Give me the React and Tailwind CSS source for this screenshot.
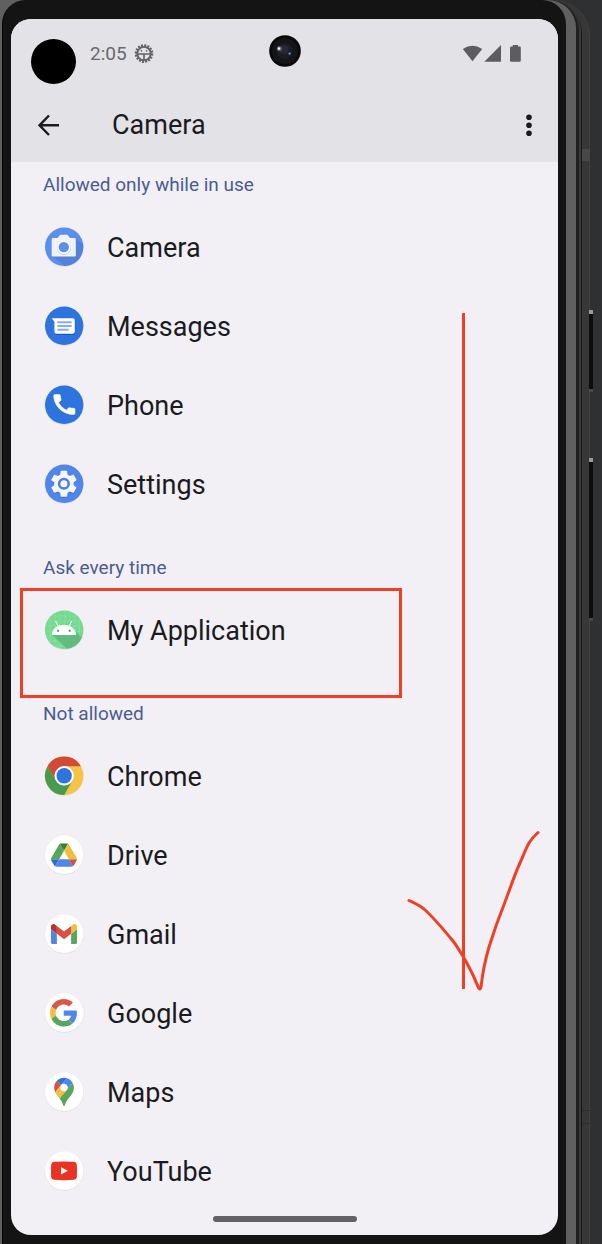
import React from "react";

function Disc({ fill = "#ffffff", children }) {
  return (
    <svg viewBox="0 0 42 42" className="size-[42px] shrink-0" aria-hidden="true">
      <circle cx="21.2" cy="21.3" r="19.6" fill="#000000" opacity="0.06" />
      <circle cx="21.2" cy="20.8" r="19.2" fill={fill} />
      {children}
    </svg>
  );
}

function CameraIcon() {
  return (
    <Disc fill="#5a8fee">
      <path d="M32.5 12.5 L40 18.5 A19.2 19.2 0 0 1 22 40 L9.500 30 Z" fill="#4f80d2" opacity="0.8" />
      <path d="M10 12 H14.6 L17 8.7 H24.6 L27 12 H31.5 Q32.8 12 32.8 13.3 V29.2 Q32.8 30.5 31.5 30.5 H10 Q8.7 30.5 8.7 29.2 V13.3 Q8.7 12 10 12 Z" fill="#f1f1f1" />
      <circle cx="20.9" cy="21.9" r="7" fill="#c9cdd4" />
      <circle cx="20.8" cy="21.1" r="6.8" fill="#fafafa" />
      <circle cx="20.8" cy="21.1" r="5.2" fill="#5a8fee" />
    </Disc>
  );
}

function MessagesIcon() {
  const bubble = "M8.7 13.2 H29.6 Q31.8 13.2 31.8 15.4 V26.6 Q31.8 28.8 29.6 28.8 H13.6 Q11.4 28.8 11.4 26.6 V17 Z";
  return (
    <Disc fill="#2e74df">
      <path d={bubble} fill="#12489f" opacity="0.6" transform="translate(0.5 1.2)" />
      <path d={bubble} fill="#ffffff" />
      <path d="M14.3 17.2 H28.7 M14.3 21 H28.7 M14.3 24.8 H25.7" stroke="#86aff2" strokeWidth="1.9" />
    </Disc>
  );
}

function PhoneIcon() {
  const handset =
    "M20.01 15.38c-1.23 0-2.42-.2-3.53-.56-.35-.12-.74-.03-1.01.24l-1.57 1.97c-2.83-1.35-5.48-3.9-6.89-6.83l1.95-1.66c.27-.28.35-.67.24-1.02-.37-1.11-.56-2.3-.56-3.53 0-.54-.45-.99-.99-.99H4.19C3.65 3 3 3.24 3 3.99 3 13.28 10.73 21 20.01 21c.71 0 .99-.63.99-1.18v-3.45c0-.54-.45-.99-.99-.99z";
  return (
    <Disc fill="#2e74df">
      <path d={handset} fill="#12489f" opacity="0.5" transform="translate(7.4 7.9) scale(1.18 1.12)" />
      <path d={handset} fill="#ffffff" stroke="#ffffff" strokeWidth="0.5" strokeLinejoin="round" transform="translate(7.2 7.1) scale(1.18 1.12)" />
    </Disc>
  );
}

function SettingsIcon() {
  const gear =
    "M19.14,12.94c0.04-0.3,0.06-0.61,0.06-0.94c0-0.32-0.02-0.64-0.07-0.94l2.03-1.58c0.18-0.14,0.23-0.41,0.12-0.61l-1.92-3.32c-0.12-0.22-0.37-0.29-0.59-0.22l-2.39,0.96c-0.5-0.38-1.03-0.7-1.62-0.94L14.4,2.81c-0.04-0.24-0.24-0.41-0.48-0.41h-3.84c-0.24,0-0.43,0.17-0.47,0.41L9.25,5.35C8.66,5.59,8.12,5.92,7.63,6.29L5.24,5.33c-0.22-0.08-0.47,0-0.59,0.22L2.74,8.87C2.62,9.08,2.66,9.34,2.86,9.48l2.03,1.58C4.84,11.36,4.8,11.69,4.8,12s0.02,0.64,0.07,0.94l-2.03,1.58c-0.18,0.14-0.23,0.41-0.12,0.61l1.92,3.32c0.12,0.22,0.37,0.29,0.59,0.22l2.39-0.96c0.5,0.38,1.03,0.7,1.62,0.94l0.36,2.54c0.05,0.24,0.24,0.41,0.48,0.41h3.84c0.24,0,0.44-0.17,0.47-0.41l0.36-2.54c0.59-0.24,1.13-0.56,1.62-0.94l2.39,0.96c0.22,0.08,0.47,0,0.59-0.22l1.92-3.32c0.12-0.22,0.07-0.47-0.12-0.61L19.14,12.94z";
  return (
    <Disc fill="#4f86ec">
      <path d={gear} fill="#2f62bf" opacity="0.6" transform="translate(4.8 5.6) scale(1.35)" />
      <path d={gear} fill="#f5f5f5" transform="translate(4.7 4.6) scale(1.35)" />
      <circle cx="20.9" cy="20.8" r="4.8" fill="#f5f5f5" stroke="#4a80e4" strokeWidth="2.5" />
    </Disc>
  );
}

function AndroidIcon() {
  return (
    <Disc fill="#73da8f">
      <path
        d="M7 8V34 M12 5V37 M17 2.5V39.5 M22 2V40 M27 3V39 M32 5.5V36.5 M36.5 10V32 M9 7H33 M4.5 12H37.5 M2.5 17H39.5 M2 22H40 M3 27H39 M5.5 32H36.5 M10 37H32"
        stroke="#95e4a9"
        strokeWidth="0.5"
      />
      <path d="M9 26 H33 L33 23 L39 28.5 A19.2 19.2 0 0 1 24 39.8 Z" fill="#5fb67d" opacity="0.85" />
      <path d="M8.7 26 A12.2 11.4 0 0 1 33 26 Z" fill="#ffffff" />
      <path d="M12.9 12.6 L15 16.4 M28.5 12.6 L26.6 16.4" stroke="#ffffff" strokeWidth="1.1" strokeLinecap="round" />
      <circle cx="15" cy="21.7" r="1.2" fill="#5bae79" />
      <circle cx="26.7" cy="21.7" r="1.2" fill="#5bae79" />
    </Disc>
  );
}

function ChromeIcon() {
  return (
    <Disc fill="#f6c445">
      <g transform="translate(0.5 0.1) scale(0.985)">
        <path d="M4.1 11.25 A19.5 19.5 0 0 1 37.9 11.25 L21 11.25 L12.56 25.88 Z" fill="#d24935" />
        <path d="M4.1 11.25 L12.56 25.88 L29.44 25.88 L21 40.5 A19.5 19.5 0 0 1 4.1 11.25 Z" fill="#479a4e" />
        <circle cx="21" cy="21" r="9.9" fill="#ffffff" />
        <circle cx="21" cy="21" r="7.8" fill="#2e74df" />
      </g>
    </Disc>
  );
}

function DriveIcon() {
  return (
    <Disc>
      <g transform="translate(8 9.4) scale(0.298)">
        <path d="m6.6 66.85 3.85 6.65c.8 1.4 1.95 2.5 3.3 3.3l13.75-23.8h-27.5c0 1.55.4 3.1 1.2 4.5z" fill="#2f68cf" />
        <path d="m43.65 25-13.75-23.8c-1.35.8-2.5 1.9-3.3 3.3l-25.4 44a9.06 9.06 0 0 0 -1.2 4.5h27.5z" fill="#58a55c" />
        <path d="m73.55 76.8c1.35-.8 2.5-1.9 3.3-3.3l1.6-2.75 7.65-13.25c.8-1.4 1.2-2.95 1.2-4.5h-27.502l5.852 11.5z" fill="#d95040" />
        <path d="m43.65 25 13.75-23.8c-1.35-.8-2.9-1.2-4.5-1.2h-18.5c-1.6 0-3.15.45-4.5 1.2z" fill="#3a7d3c" />
        <path d="m59.8 53h-32.3l-13.75 23.8c1.35.8 2.9 1.2 4.5 1.2h50.8c1.6 0 3.15-.45 4.5-1.2z" fill="#5086ec" />
        <path d="m73.4 26.5-12.7-22c-.8-1.4-1.95-2.5-3.3-3.3l-13.75 23.8 16.15 28h27.45c0-1.55-.4-3.1-1.2-4.5z" fill="#f2be42" />
      </g>
    </Disc>
  );
}

function GmailIcon() {
  return (
    <Disc>
      <g transform="translate(-7.5 -1.6) scale(0.297 0.303)">
        <path d="M58 108h14V74L52 59v43c0 3.32 2.69 6 6 6" fill="#5086ec" />
        <path d="M120 108h14c3.32 0 6-2.69 6-6V59l-20 15" fill="#58a55c" />
        <path d="M120 48v26l20-15v-8c0-7.42-8.47-11.65-14.4-7.2" fill="#f2be42" />
        <path d="M72 74V48l24 18 24-18v26L96 92" fill="#d95040" />
        <path d="M52 51v8l20 15V48l-5.6-4.2c-5.94-4.45-14.4-.22-14.4 7.2" fill="#b3352b" />
      </g>
    </Disc>
  );
}

function GoogleIcon() {
  return (
    <Disc>
      <g transform="translate(7 7) scale(0.573)">
        <path d="M24 9.5c3.54 0 6.71 1.22 9.21 3.6l6.85-6.85C35.9 2.38 30.47 0 24 0 14.62 0 6.51 5.38 2.56 13.22l7.98 6.19C12.43 13.72 17.74 9.5 24 9.5z" fill="#d95848" />
        <path d="M46.98 24.55c0-1.57-.15-3.09-.38-4.55H24v9.02h12.94c-.58 2.96-2.26 5.48-4.78 7.18l7.73 6c4.51-4.18 7.09-10.36 7.09-17.65z" fill="#5086ec" />
        <path d="M10.53 28.59c-.48-1.45-.76-2.99-.76-4.59s.27-3.14.76-4.59l-7.98-6.19C.92 16.46 0 20.12 0 24c0 3.88.92 7.54 2.56 10.78l7.97-6.19z" fill="#f2be42" />
        <path d="M24 48c6.48 0 11.93-2.13 15.89-5.81l-7.73-6c-2.15 1.45-4.92 2.3-8.16 2.3-6.26 0-11.57-4.22-13.47-9.91l-7.98 6.19C6.51 42.62 14.62 48 24 48z" fill="#58a55c" />
      </g>
    </Disc>
  );
}

function MapsIcon() {
  return (
    <Disc>
      <g transform="translate(11.2 6.7) scale(0.213)">
        <path d="M60.2 2.2C55.8.8 51 0 46.1 0 32 0 19.3 6.4 10.8 16.5l21.8 18.3L60.2 2.2z" fill="#2e74df" />
        <path d="M10.8 16.5C4.1 24.5 0 34.9 0 46.1c0 8.7 1.7 15.7 4.6 22l28-33.3-21.8-18.3z" fill="#d95040" />
        <path d="M46.2 28.5c9.8 0 17.7 7.9 17.7 17.7 0 4.3-1.6 8.3-4.2 11.4 0 0 13.9-16.6 27.5-32.7-5.6-10.8-15.3-19-27-22.7L32.6 34.8c3.3-3.8 8.1-6.3 13.6-6.3" fill="#5086ec" />
        <path d="M46.2 63.8c-9.8 0-17.7-7.9-17.7-17.7 0-4.3 1.5-8.3 4.1-11.3l-28 33.3c4.8 10.6 12.8 19.2 21 29.9l34.1-40.5c-3.3 3.9-8.1 6.3-13.5 6.3" fill="#f2be42" />
        <path d="M59.1 109.2c15.4-24.1 33.3-35 33.3-63 0-7.7-1.9-14.9-5.2-21.3L25.6 98c2.6 3.4 5.3 7.3 7.9 11.3 9.4 14.5 6.8 23.1 12.8 23.1s3.4-8.7 12.8-23.2" fill="#58a55c" />
      </g>
    </Disc>
  );
}

function YouTubeIcon() {
  return (
    <Disc>
      <path d="M11 11.8 Q21 11 31 11.8 Q33.4 12 33.8 14.4 Q34.3 20.8 33.8 27.2 Q33.4 29.600 31 29.8 Q21 30.6 11 29.8 Q8.6 29.6 8.2 27.2 Q7.7 20.8 8.2 14.4 Q8.6 12 11 11.8 Z" fill="#ea3323" />
      <path d="M18 17.2 L24.8 20.8 L18 24.4 Z" fill="#ffffff" />
    </Disc>
  );
}

function DebugIcon() {
  return (
    <svg viewBox="0 0 20 20" className="size-5" fill="none" stroke="#626164" aria-hidden="true">
      <circle cx="10" cy="9.600" r="8.1" strokeWidth="2.4" strokeDasharray="1.900 1.28" />
      <circle cx="10" cy="9.600" r="6.7" strokeWidth="1.9" />
      <path d="M4 10 H16 M10 10 V16" strokeWidth="1.6" />
      <circle cx="7.4" cy="6.900" r="0.8" fill="#626164" stroke="none" />
      <circle cx="12.6" cy="6.900" r="0.8" fill="#626164" stroke="none" />
    </svg>
  );
}

function StatusIcons() {
  return (
    <svg viewBox="0 0 60 20" className="h-5 w-[60px]" fill="#5d5c5f" aria-label="Wi-Fi, signal and battery">
      <path d="M0.8 5 Q10.5 -1.4 20.2 5 L10.5 17.2 Z" />
      <path d="M22.3 17.8 L39 1 V17.8 Z" />
      <path d="M50.8 1 H56 V2.6 H57.5 Q58.8 2.6 58.8 3.9 V16.5 Q58.8 17.8 57.5 17.8 H49.3 Q48 17.8 48 16.5 V3.9 Q48 2.6 49.3 2.6 H50.8 Z" />
    </svg>
  );
}

function Lens() {
  return (
    <svg viewBox="0 0 32 32" className="size-8" aria-hidden="true">
      <circle cx="16" cy="16" r="15.8" fill="#0a0a0b" />
      <circle cx="16" cy="16" r="13" fill="#151517" />
      <circle cx="15.5" cy="16" r="8" fill="#1c1d24" />
      <circle cx="15" cy="14.5" r="4.5" fill="#282936" />
      <circle cx="10.3" cy="13.7" r="2.6" fill="#6d6c8c" opacity="0.7" />
      <circle cx="10" cy="13.6" r="1.3" fill="#e6f2ee" />
      <circle cx="20.6" cy="18.6" r="1.5" fill="#29588f" />
      <circle cx="20.6" cy="18.6" r="0.7" fill="#7fb7ee" />
    </svg>
  );
}

const sections = [
  {
    title: "Allowed only while in use",
    apps: [
      ["Camera", CameraIcon],
      ["Messages", MessagesIcon],
      ["Phone", PhoneIcon],
      ["Settings", SettingsIcon],
    ],
  },
  { title: "Ask every time", marked: true, apps: [["My Application", AndroidIcon]] },
  {
    title: "Not allowed",
    apps: [
      ["Chrome", ChromeIcon],
      ["Drive", DriveIcon],
      ["Gmail", GmailIcon],
      ["Google", GoogleIcon],
      ["Maps", MapsIcon],
      ["YouTube", YouTubeIcon],
    ],
  },
];

function Section({ title, apps, marked }) {
  return (
    <section className="relative">
      <h2 className="flex h-[45px] items-center pl-8 text-[19px] leading-6 text-[#4a5c92]">{title}</h2>
      <ul>
        {apps.map(([name, Icon]) => (
          <li key={name}>
            <button type="button" className="flex h-[79px] w-full items-center gap-[22px] pl-8 text-left text-[27px] leading-8 text-[#1b1b1f]">
              <Icon />
              <span className="pt-[2px]">{name}</span>
            </button>
          </li>
        ))}
      </ul>
      {marked && <div className="pointer-events-none absolute top-[43px] left-[9px] h-[110px] w-[382px] border-3 border-[#ee4026]" />}
    </section>
  );
}

function Screen() {
  return (
    <main className="relative overflow-hidden rounded-[20px] bg-[#f2f0f5] font-[Roboto,sans-serif]">
      <header className="bg-[#e3e2e6]">
        <div className="relative flex h-[69px] items-center justify-between pr-9 pl-5">
          <div className="flex items-center">
            <span className="mt-4 size-[45px] rounded-full bg-black" />
            <span className="ml-[14px] text-[19px] leading-6 text-[#6a696c]">2:05</span>
            <span className="ml-[7px]">
              <DebugIcon />
            </span>
          </div>
          <div className="absolute inset-x-0 top-4 flex justify-center">
            <Lens />
          </div>
          <StatusIcons />
        </div>
        <div className="flex h-[74px] items-center pr-[17px] pl-[25px]">
          <button type="button" aria-label="Back" className="size-6">
            <svg viewBox="0 0 24 24" className="size-6" fill="none" stroke="#1b1b1f" strokeWidth="2.4">
              <path d="M23 12.300 H3.800 M13 2.5 L3.5 12.300 L13 22" />
            </svg>
          </button>
          <h1 className="ml-[52px] flex-1 text-[27px] leading-8 text-[#1b1b1f]">Camera</h1>
          <button type="button" aria-label="More options" className="size-6">
            <svg viewBox="0 0 24 24" className="size-6" fill="#1b1b1f">
              <circle cx="12" cy="4.2" r="2.8" />
              <circle cx="12" cy="12.2" r="2.8" />
              <circle cx="12" cy="20.2" r="2.8" />
            </svg>
          </button>
        </div>
      </header>
      <div className="flex flex-col gap-[22px]">
        {sections.map((section) => (
          <Section key={section.title} {...section} />
        ))}
      </div>
      <div className="flex h-[25px] items-start justify-center pt-[6px]">
        <span className="h-[6px] w-36 rounded-full bg-[#626164]" />
      </div>
      <svg viewBox="0 0 140 690" className="pointer-events-none absolute top-[290px] left-[391px] h-[690px] w-[140px]" fill="none" stroke="#ee4026" strokeWidth="3" aria-hidden="true">
        <path d="M61.5 4 V680" />
        <path
          d="M7 591.5 C12 594 17 596 22 600 C32 609 42 621 51 632 C55 637 58 643 61.5 648 C65 654 68 660 70.5 665 C73 670 75 676 77 679.500 Q78.500 681 79 678 C80 669 82 655 87 638 C92 622 97 608 103 593 C108 580 112 567 118 554 C122 545 124 539 127 534 Q130 529 136 523.5"
          strokeLinecap="round"
          strokeLinejoin="round"
        />
      </svg>
    </main>
  );
}

export default function App() {
  return (
    <div className="relative min-h-screen bg-[#2f3032] pr-3">
      <div className="rounded-tr-[36px] border-r border-[#404142] bg-[#373737] pr-[7px]">
        <div className="rounded-tr-[34px] bg-[#151515] pr-px">
          <div className="rounded-tr-[32px] bg-[#3a3a3a] pr-[2px]">
            <div className="rounded-tr-[30px] bg-[#202020] pr-[3px]">
              <div className="rounded-tr-[28px] bg-[#606060] pr-[10px] pl-[2px]">
                <div className="rounded-tl-[24px] rounded-tr-[24px] border-l border-[#050505] bg-[#141414] pt-[19px] pr-2 pb-[9px] pl-2">
                  <Screen />
                </div>
              </div>
            </div>
          </div>
        </div>
      </div>
      <div className="absolute top-[310px] right-[9px] h-[82px] w-1 border-t-4 border-b-3 border-t-[#9a9a9a] border-b-[#484848] bg-[#0d0d0d]" />
      <div className="absolute top-[458px] right-[9px] h-[163px] w-1 border-t-4 border-b-3 border-t-[#9a9a9a] border-b-[#484848] bg-[#0d0d0d]" />
      <div className="absolute top-[149px] right-3 h-3 w-2 bg-[#484848]" />
      <div className="absolute top-[1110px] right-3 h-[14px] w-2 border-y border-[#2c2c2c]" />
    </div>
  );
}
